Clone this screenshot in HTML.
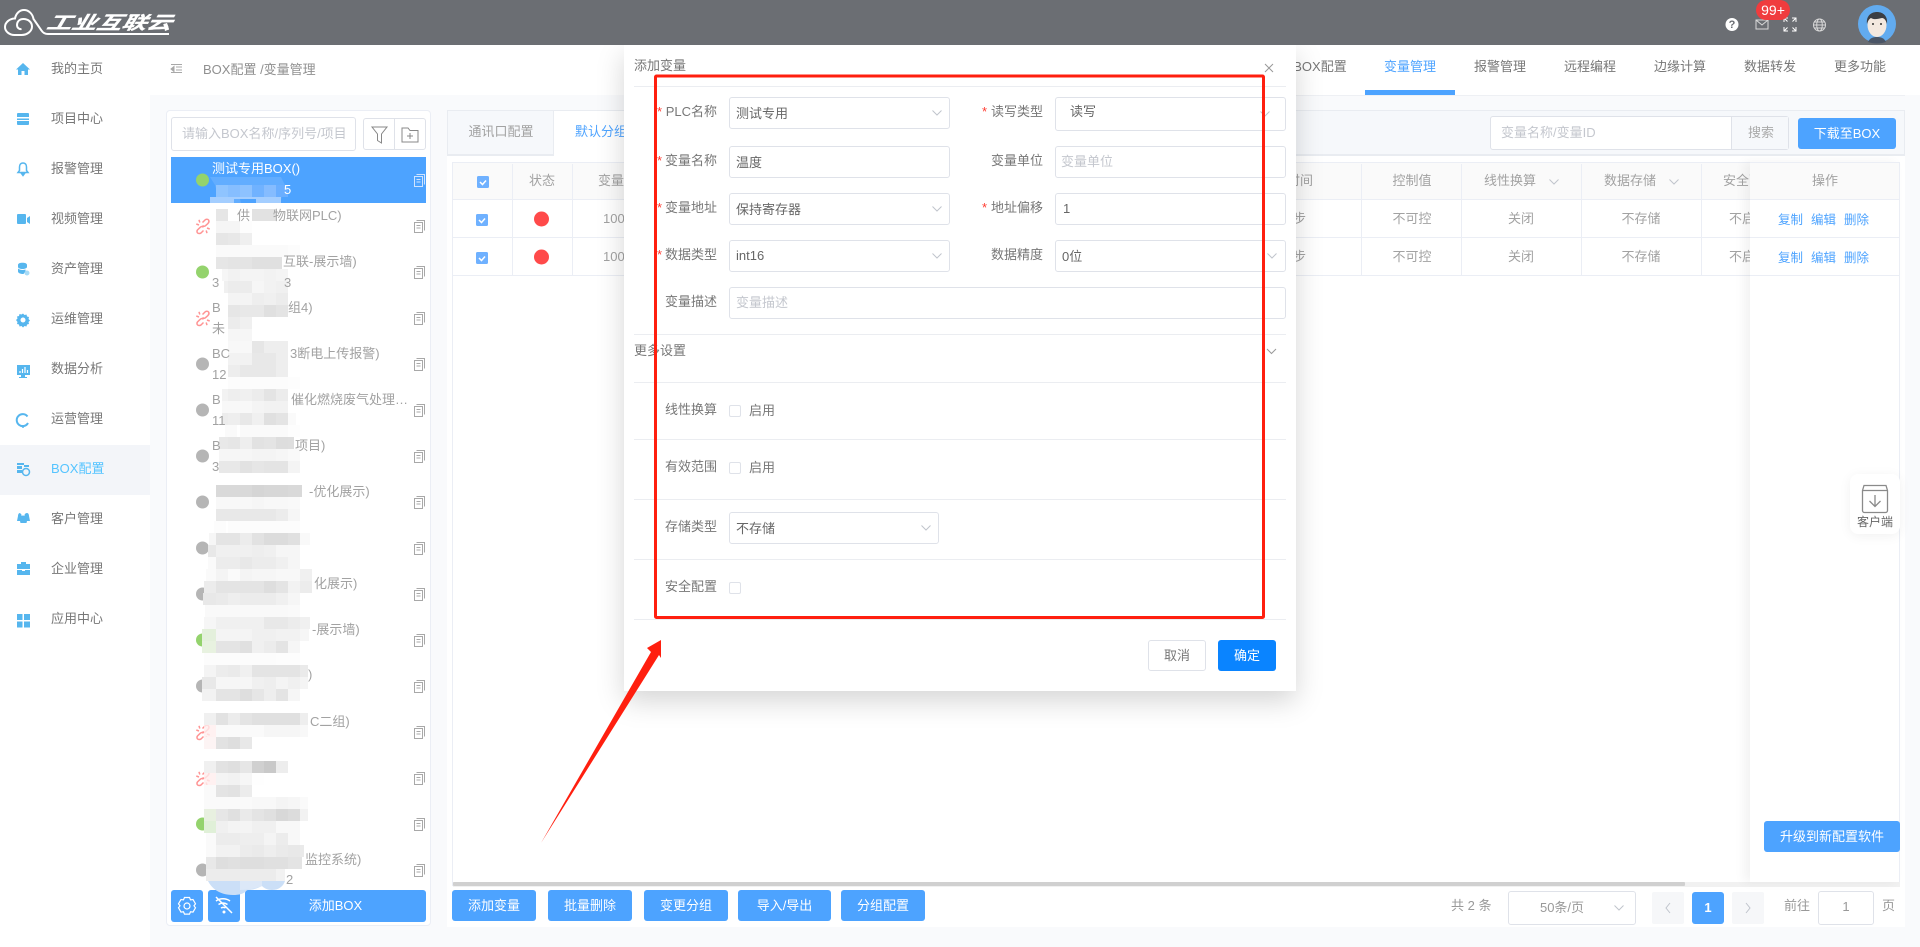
<!DOCTYPE html>
<html lang="zh-CN"><head><meta charset="utf-8"><title>BOX配置</title>
<style>
html,body{margin:0;padding:0;width:1920px;height:947px;overflow:hidden;background:#fff}
body{position:relative;font-family:"Liberation Sans","Noto Sans CJK SC",sans-serif;font-size:13px;color:#777}
.a,.t,.c,.r{position:absolute;box-sizing:border-box}
.t,.c,.r{white-space:nowrap;height:18px;line-height:18px}
.c{transform:translateX(-50%)}
.r{transform:translateX(-100%)}
.b{background:#4da3ff;color:#fff;border-radius:3px;text-align:center}
.i{background:#fff;border:1px solid #dfe2e9;border-radius:3px}
.g{color:#a2a2a2}
.w{color:#fff}
.l{color:#4da3ff}
.h{color:#c4c7ce}
.lb{color:#777}
.v{color:#666}
.s{color:#ff3b30}
svg{position:absolute;left:0;top:0;overflow:visible}
.m rect{width:12px;height:12px}
</style></head><body>
<svg width="0" height="0" style="position:absolute"><defs>
<symbol id="cp" viewBox="0 0 11 13" overflow="visible"><path d="M2.500 .5h8v10M.5 2.500h8v10h-8zM2.500 5.500h4M2.500 8h4" fill="none" stroke="#a8a8a8" stroke-width="1"/></symbol>
<symbol id="ch" viewBox="0 0 10 6" overflow="visible"><path d="M.5 .5L5 5 9.500 .5" fill="none" stroke="#c0c4cc" stroke-width="1"/></symbol>
<symbol id="lk" viewBox="0 0 14 15" overflow="visible"><path d="M6.500 3.500l2.500-2.500c1-1 3-1 3.700.2.600 1.300.200 2.300-.700 3.200l-2.500 2.300c-1 .8-2.200.6-3-.2M7.500 11.500L5 14c-1 .8-3 .8-3.700-.4-.6-1.200-.2-2.400.7-3.200l2.500-2.300c1-.8 2.200-.6 3 .2M.3 5L3 6M3 .8l.8 2.700M13.700 10L11 9M11 14.200l-.8-2.700" fill="none" stroke="#ff9494" stroke-width="1.500"/></symbol>
</defs></svg>

<!-- main background -->
<div class="a" style="left:150px;top:95px;width:1770px;height:852px;background:#f9fafc"></div>
<div class="a" style="left:1296px;top:95px;width:609px;height:1px;background:#eef0f4"></div>
<!-- sidebar active -->
<div class="a" style="left:0;top:445px;width:150px;height:50px;background:#f3f5f9"></div>

<!-- sidebar icons -->
<svg width="150" height="680">
<g fill="#56b6ee">
<path d="M23 63l7 6.500h-2v5.500h-3.500v-4h-3v4H18v-5.500h-2z"/>
<path d="M18 113h10a1 1 0 0 1 1 1v3H17v-3a1 1 0 0 1 1-1zM17 118.500h12v1.500H17zM17 121h12v3a1 1 0 0 1-1 1H18a1 1 0 0 1-1-1z"/>
<path d="M23 163c2.500 0 3.500 2 3.500 4v3.500l1.500 2h-10l1.500-2V167c0-2 1-4 3.500-4zM21.500 173.500h3l-1.500 2z" fill="none" stroke="#56b6ee" stroke-width="1.500"/>
<path d="M17 215a1 1 0 0 1 1-1h7a1 1 0 0 1 1 1v8a1 1 0 0 1-1 1h-7a1 1 0 0 1-1-1zM27 218l3-2v8l-3-2z"/>
<path d="M18 265c0-1.500 2-2.200 4.500-2.200s4.500.7 4.500 2.200v2c0 1-2 2-4.500 2s-4.500-1-4.500-2zM18 268.500c1 1 3 1.500 4.500 1.500 1 0 2-.2 3-.5v2l-2 2.500c-3 0-5.500-1-5.500-2.500z"/>
<circle cx="27" cy="273" r="2.500" fill="#a8dbf6"/>
<path d="M23 313.500l1.500 1.500 2-.5.500 2 2 .5-.5 2 1.500 1.500-1.500 1.500.5 2-2 .5-.5 2-2-.5-1.500 1.500-1.500-1.500-2 .5-.5-2-2-.5.5-2L16 320l1.500-1.500-.5-2 2-.5.500-2 2 .5z"/>
<circle cx="23" cy="320" r="2.500" fill="#fff"/>
<path d="M17 365h13v10h-5v2h2v1h-8v-1h2v-2h-4z"/>
<path d="M20 373v-2M22.500 373v-4M25 373v-6M27.500 373v-3" stroke="#fff" stroke-width="1.200"/>
</g>
<g fill="none" stroke="#56b6ee" stroke-width="2"><path d="M27.500 416.500a6 6 0 1 0 .5 6.500"/><path d="M23 425v3" stroke-width="1.500"/></g>
<g fill="#56b6ee">
<path d="M17 463h7v2h-7zM17 466h5v3h-5zM17 470h5v3h-5zM24 465h5v2h-5z"/>
<path d="M19 513a2.500 2.500 0 0 1 2.500 3 2.500 2.500 0 0 1 3 0 2.500 2.500 0 0 1 2.500-3c1.300 0 2 1.500 2 3l1 5h-3l-.5 2h-6l-.5-2h-3l1-5c0-1.500.700-3 2-3z"/>
<path d="M17 564h4v-2h5v2h4v5H17zM17 570h5v1h3v-1h5v5H17zM22.500 563h2v1h-2z"/>
<path d="M17 614h5.500v6H17zM24 614h6v6h-6zM17 621.500h5.500v6H17zM24 621.500h6v6h-6z"/>
</g>
<circle cx="26" cy="472" r="3.500" fill="#f3f5f9" stroke="#56b6ee" stroke-width="1.500"/>
</svg>
<span class="t" style="left:51px;top:60px">我的主页</span>
<span class="t" style="left:51px;top:110px">项目中心</span>
<span class="t" style="left:51px;top:160px">报警管理</span>
<span class="t" style="left:51px;top:210px">视频管理</span>
<span class="t" style="left:51px;top:260px">资产管理</span>
<span class="t" style="left:51px;top:310px">运维管理</span>
<span class="t" style="left:51px;top:360px">数据分析</span>
<span class="t" style="left:51px;top:410px">运营管理</span>
<span class="t" style="left:51px;top:460px;color:#55c4ff">BOX配置</span>
<span class="t" style="left:51px;top:510px">客户管理</span>
<span class="t" style="left:51px;top:560px">企业管理</span>
<span class="t" style="left:51px;top:610px">应用中心</span>

<!-- breadcrumb -->
<svg width="200" height="90"><path d="M171 64.500h11M176 67h6M176 70h6M171 72.500h11M174 66.500l-3 2.500 3 2.500z" stroke="#a8a8a8" stroke-width="1" fill="#a8a8a8"/></svg>
<span class="t g" style="left:203px;top:61px;color:#909090">BOX配置 /变量管理</span>

<!-- top tabs -->
<span class="c lb" style="left:1320px;top:58px">BOX配置</span>
<span class="c l" style="left:1410px;top:58px">变量管理</span>
<div class="a" style="left:1365px;top:90px;width:90px;height:5px;background:#4da3ff"></div>
<span class="c lb" style="left:1500px;top:58px">报警管理</span>
<span class="c lb" style="left:1590px;top:58px">远程编程</span>
<span class="c lb" style="left:1680px;top:58px">边缘计算</span>
<span class="c lb" style="left:1770px;top:58px">数据转发</span>
<span class="c lb" style="left:1860px;top:58px">更多功能</span>

<!-- left panel -->
<div class="a" style="left:166px;top:110px;width:265px;height:816px;background:#fff;border:1px solid #ebeef5;border-radius:4px"></div>
<div class="a i" style="left:171px;top:117px;width:185px;height:34px"></div>
<span class="t h" style="left:182px;top:125px">请输入BOX名称/序列号/项目</span>
<div class="a i" style="left:363px;top:118px;width:63px;height:32px"></div>
<div class="a" style="left:394px;top:118px;width:1px;height:32px;background:#dfe2e9"></div>
<svg width="440" height="160"><path d="M372 127h15l-5.500 7v9l-4-2.500V134z" fill="none" stroke="#888" stroke-width="1"/><path d="M402 128h6l2 2.500h8v11.500h-16zM410 133v6M407 136h6" fill="none" stroke="#888" stroke-width="1"/></svg>
<div class="a" style="left:171px;top:157px;width:255px;height:46px;background:#4da3ff"></div>

<svg width="440" height="900">
<g fill="#b5b5b5">
<circle cx="202.500" cy="364" r="6.500"/><circle cx="202.500" cy="410" r="6.500"/><circle cx="202.500" cy="456" r="6.500"/><circle cx="202.500" cy="502" r="6.500"/><circle cx="202.500" cy="548" r="6.500"/><circle cx="202.500" cy="594" r="6.500"/><circle cx="202.500" cy="686" r="6.500"/><circle cx="202.500" cy="870" r="6.500"/>
</g>
<g fill="#94d36d"><circle cx="202.500" cy="180" r="6.500"/><circle cx="202.500" cy="272" r="6.500"/><circle cx="202.500" cy="640" r="6.500"/><circle cx="202.500" cy="824" r="6.500"/></g>
<use href="#lk" x="196" y="219" width="14" height="15"/><use href="#lk" x="196" y="311" width="14" height="15"/><use href="#lk" x="196" y="725" width="14" height="15"/><use href="#lk" x="196" y="771" width="14" height="15"/>
<path d="M416.500 174.500h8v10M414.500 176.500h8v10h-8zM416.500 179.500h4M416.500 182h4" fill="none" stroke="#cfe4ff" stroke-width="1"/>
<use href="#cp" x="414" y="220" width="11" height="13"/><use href="#cp" x="414" y="266" width="11" height="13"/><use href="#cp" x="414" y="312" width="11" height="13"/><use href="#cp" x="414" y="358" width="11" height="13"/><use href="#cp" x="414" y="404" width="11" height="13"/><use href="#cp" x="414" y="450" width="11" height="13"/><use href="#cp" x="414" y="496" width="11" height="13"/><use href="#cp" x="414" y="542" width="11" height="13"/><use href="#cp" x="414" y="588" width="11" height="13"/><use href="#cp" x="414" y="634" width="11" height="13"/><use href="#cp" x="414" y="680" width="11" height="13"/><use href="#cp" x="414" y="726" width="11" height="13"/><use href="#cp" x="414" y="772" width="11" height="13"/><use href="#cp" x="414" y="818" width="11" height="13"/><use href="#cp" x="414" y="864" width="11" height="13"/>
</svg>

<!-- buttons under list -->
<div class="a b" style="left:171px;top:890px;width:32px;height:32px"></div>
<div class="a b" style="left:208px;top:890px;width:32px;height:32px"></div>
<div class="a b" style="left:245px;top:890px;width:181px;height:32px;line-height:32px">添加BOX</div>
<svg width="260" height="930"><path d="M184.500 897.500h5l1 2.300 2.500-.3 2.500 4.300-1.500 2 1.500 2-2.500 4.300-2.500-.3-1 2.300h-5l-1-2.300-2.500.3-2.500-4.300 1.500-2-1.500-2 2.500-4.300 2.500.3z" fill="none" stroke="#fff" stroke-width="1.200"/><circle cx="187" cy="906" r="3" fill="none" stroke="#fff" stroke-width="1.200"/><path d="M216 901c4-3 10-3 14 0M218.500 904.500c3-2 6-2 9 0M221 908c2-1 3-1 4.500 0M216 897l16 16" fill="none" stroke="#fff" stroke-width="1.500"/><circle cx="224" cy="912" r="1.500" fill="#fff"/></svg>

<!-- mosaic -->
<svg width="340" height="900" class="m">
<path d="M210 177h71l4 8-5 18h-22l4-4h-22l1 4h-21l-5-18z" fill="#62adff"/>
<rect x="210" y="197" fill="#a4ceff" style="width:24px;height:6px"/><rect x="256" y="197" fill="#a4ceff" style="width:25px;height:6px"/><rect x="234" y="197" fill="#a4ceff" style="width:22px;height:2px"/>
<g transform="translate(0,185)"><rect x="216" fill="#8fc4ff"/><rect x="228" fill="#86beff"/><rect x="240" fill="#8dc2ff"/><rect x="252" fill="#70b2ff"/><rect x="264" fill="#85bcff"/><rect x="276" fill="#6aaeff"/></g>
<path d="M214 203h19l1 6h18l5-6h1l-24 50h-16z" fill="#fff"/>
<g transform="translate(0,209)"><rect x="216" fill="#e6e6e6"/><rect x="252" fill="#e2e2e2"/><rect x="264" fill="#e2e2e2"/></g>
<g transform="translate(0,221)"><rect x="216" fill="#f5f5f5"/><rect x="228" fill="#f5f5f5"/><rect x="240" fill="#fdfdfd"/></g>
<g transform="translate(0,233)"><rect x="216" fill="#e6e6e6"/><rect x="228" fill="#e8e8e8"/><rect x="240" fill="#efefef"/></g>
<g transform="translate(0,245)"><rect x="216" fill="#fafafa"/><rect x="228" fill="#fafafa"/><rect x="240" fill="#fafafa"/><rect x="252" fill="#fafafa"/><rect x="264" fill="#fafafa"/><rect x="276" fill="#fafafa"/><rect x="288" fill="#fcfcfc"/></g>
<g transform="translate(0,257)"><rect x="216" fill="#e6e6e6"/><rect x="228" fill="#e4e4e4"/><rect x="240" fill="#e4e4e4"/><rect x="252" fill="#e0e0e0"/><rect x="264" fill="#e0e0e0"/><rect x="276" fill="#e0e0e0" style="width:6px"/></g>
<g transform="translate(0,269)"><rect x="222" fill="#f6f6f6"/><rect x="228" fill="#f2f2f2"/><rect x="240" fill="#f4f4f4"/><rect x="252" fill="#f4f4f4"/><rect x="264" fill="#f2f2f2"/><rect x="276" fill="#f4f4f4"/></g>
<g transform="translate(0,281)"><rect x="224" fill="#f0f0f0"/><rect x="228" fill="#ececec"/><rect x="240" fill="#ececec"/><rect x="252" fill="#f6f6f6"/><rect x="264" fill="#f2f2f2"/><rect x="276" fill="#f0f0f0"/></g>
<g transform="translate(0,293)"><rect x="228" fill="#f4f4f4"/><rect x="240" fill="#f4f4f4"/><rect x="252" fill="#eeeeee"/><rect x="264" fill="#f0f0f0"/><rect x="276" fill="#ececec"/></g>
<g transform="translate(0,305)"><rect x="228" fill="#e6e6e6"/><rect x="240" fill="#e8e8e8"/><rect x="252" fill="#e8e8e8"/><rect x="264" fill="#e0e0e0"/><rect x="276" fill="#e4e4e4"/></g>
<g transform="translate(0,317)"><rect x="228" fill="#ececec"/><rect x="240" fill="#f0f0f0"/></g>
<g transform="translate(0,329)"><rect x="228" fill="#f6f6f6"/><rect x="240" fill="#f6f6f6"/></g>
<g transform="translate(0,341)"><rect x="228" fill="#f8f8f8"/><rect x="240" fill="#f8f8f8"/><rect x="252" fill="#e6e6e6"/><rect x="264" fill="#eeeeee"/><rect x="276" fill="#eeeeee"/></g>
<g transform="translate(0,353)"><rect x="228" fill="#f2f2f2"/><rect x="240" fill="#f2f2f2"/><rect x="252" fill="#e8e8e8"/><rect x="264" fill="#e8e8e8"/><rect x="276" fill="#eeeeee"/></g>
<g transform="translate(0,365)"><rect x="228" fill="#ededed"/><rect x="240" fill="#e8e8e8"/><rect x="252" fill="#e8e8e8"/><rect x="264" fill="#e8e8e8"/><rect x="276" fill="#eeeeee"/></g>
<g transform="translate(0,377)"><rect x="228" fill="#fcfcfc"/><rect x="240" fill="#fcfcfc"/><rect x="252" fill="#fcfcfc"/><rect x="264" fill="#fcfcfc"/><rect x="276" fill="#fcfcfc"/><rect x="288" fill="#fdfdfd"/></g>
<g transform="translate(0,389)"><rect x="222" fill="#f2f2f2"/><rect x="228" fill="#eeeeee"/><rect x="240" fill="#f0f0f0"/><rect x="252" fill="#ececec"/><rect x="264" fill="#e4e4e4"/><rect x="276" fill="#ececec"/></g>
<g transform="translate(0,401)"><rect x="222" fill="#f8f8f8"/><rect x="228" fill="#f8f8f8"/><rect x="240" fill="#f8f8f8"/><rect x="252" fill="#f4f4f4"/><rect x="264" fill="#f2f2f2"/><rect x="276" fill="#f2f2f2"/></g>
<g transform="translate(0,413)"><rect x="222" fill="#ececec"/><rect x="228" fill="#eeeeee"/><rect x="240" fill="#e8e8e8"/><rect x="252" fill="#f0f0f0"/><rect x="264" fill="#e0e0e0"/><rect x="276" fill="#e4e4e4"/><rect x="288" fill="#fafafa" style="width:8px"/></g>
<g transform="translate(0,425)"><rect x="225" fill="#fafafa"/><rect x="240" fill="#fafafa"/><rect x="252" fill="#fafafa"/><rect x="264" fill="#fafafa"/><rect x="276" fill="#fafafa"/><rect x="288" fill="#fdfdfd"/></g>
<g transform="translate(0,437)"><rect x="219" fill="#e8e8e8"/><rect x="228" fill="#e6e6e6"/><rect x="240" fill="#eeeeee"/><rect x="252" fill="#e2e2e2"/><rect x="264" fill="#e4e4e4"/><rect x="276" fill="#dddddd"/><rect x="288" fill="#dedede" style="width:6px"/></g>
<g transform="translate(0,449)"><rect x="219" fill="#f6f6f6"/><rect x="228" fill="#f6f6f6"/><rect x="240" fill="#f6f6f6"/><rect x="252" fill="#f4f4f4"/><rect x="264" fill="#f4f4f4"/><rect x="276" fill="#f6f6f6"/><rect x="288" fill="#f9f9f9"/></g>
<g transform="translate(0,461)"><rect x="219" fill="#e8e8e8"/><rect x="228" fill="#e8e8e8"/><rect x="240" fill="#e2e2e2"/><rect x="252" fill="#e6e6e6"/><rect x="264" fill="#e4e4e4"/><rect x="276" fill="#e4e4e4"/><rect x="288" fill="#f4f4f4"/></g>
<g transform="translate(0,485)"><rect x="216" fill="#d9d9d9"/><rect x="228" fill="#d9d9d9"/><rect x="240" fill="#d9d9d9"/><rect x="252" fill="#d5d5d5"/><rect x="264" fill="#d7d7d7"/><rect x="276" fill="#d7d7d7"/><rect x="288" fill="#d9d9d9" style="width:14px"/></g>
<g transform="translate(0,497)"><rect x="216" fill="#f8f8f8"/><rect x="228" fill="#f8f8f8"/><rect x="240" fill="#f8f8f8"/><rect x="252" fill="#f6f6f6"/><rect x="264" fill="#f8f8f8"/><rect x="276" fill="#f8f8f8"/><rect x="288" fill="#f9f9f9"/></g>
<g transform="translate(0,509)"><rect x="216" fill="#e8e8e8"/><rect x="228" fill="#e8e8e8"/><rect x="240" fill="#e8e8e8"/><rect x="252" fill="#e8e8e8"/><rect x="264" fill="#e8e8e8"/><rect x="276" fill="#ececec"/><rect x="288" fill="#f6f6f6"/></g>
<g transform="translate(0,521)"><rect x="214" fill="#fcfcfc"/><rect x="228" fill="#fcfcfc"/><rect x="240" fill="#fcfcfc"/><rect x="252" fill="#fcfcfc"/><rect x="264" fill="#fcfcfc"/><rect x="276" fill="#fcfcfc"/><rect x="288" fill="#fcfcfc"/></g>
<g transform="translate(0,533)"><rect x="209" fill="#f6f6f6" style="width:7px"/><rect x="216" fill="#e4e4e4"/><rect x="228" fill="#e4e4e4"/><rect x="240" fill="#ececec"/><rect x="252" fill="#e2e2e2"/><rect x="264" fill="#dcdcdc"/><rect x="276" fill="#dcdcdc"/><rect x="288" fill="#e0e0e0"/><rect x="300" fill="#f9f9f9" style="width:10px"/></g>
<g transform="translate(0,545)"><rect x="208" fill="#e8e8e8" style="width:8px"/><rect x="216" fill="#f0f0f0"/><rect x="228" fill="#f0f0f0"/><rect x="240" fill="#f0f0f0"/><rect x="252" fill="#eeeeee"/><rect x="264" fill="#f0f0f0"/><rect x="276" fill="#f6f6f6"/><rect x="288" fill="#f6f6f6"/></g>
<g transform="translate(0,557)"><rect x="208" fill="#fafafa" style="width:8px"/><rect x="216" fill="#ececec"/><rect x="228" fill="#ececec"/><rect x="240" fill="#e8e8e8"/><rect x="252" fill="#ececec"/><rect x="264" fill="#ececec"/><rect x="276" fill="#f0f0f0"/><rect x="288" fill="#f6f6f6"/></g>
<g transform="translate(0,569)"><rect x="206" fill="#fafafa" style="width:10px"/><rect x="216" fill="#f4f4f4"/><rect x="228" fill="#fafafa"/><rect x="240" fill="#f4f4f4"/><rect x="252" fill="#f6f6f6"/><rect x="264" fill="#f6f6f6"/><rect x="276" fill="#f8f8f8"/><rect x="288" fill="#f8f8f8"/><rect x="300" fill="#f0f0f0"/></g>
<g transform="translate(0,581)"><rect x="204" fill="#ececec"/><rect x="216" fill="#e4e4e4"/><rect x="228" fill="#e4e4e4"/><rect x="240" fill="#e4e4e4"/><rect x="252" fill="#e4e4e4"/><rect x="264" fill="#dedede"/><rect x="276" fill="#e4e4e4"/><rect x="288" fill="#f2f2f2"/><rect x="300" fill="#ececec"/></g>
<g transform="translate(0,593)"><rect x="203" fill="#e8e8e8" style="width:13px"/><rect x="216" fill="#eaeaea"/><rect x="228" fill="#eeeeee"/><rect x="240" fill="#ececec"/><rect x="252" fill="#ececec"/><rect x="264" fill="#ececec"/><rect x="276" fill="#f0f0f0"/><rect x="288" fill="#f6f6f6"/></g>
<g transform="translate(0,605)"><rect x="205" fill="#f9f9f9" style="width:11px"/><rect x="216" fill="#f9f9f9"/><rect x="228" fill="#f9f9f9"/><rect x="240" fill="#f9f9f9"/><rect x="252" fill="#f9f9f9"/><rect x="264" fill="#f9f9f9"/><rect x="276" fill="#f9f9f9"/><rect x="288" fill="#fafafa"/></g>
<g transform="translate(0,617)"><rect x="204" fill="#f6f6f6"/><rect x="216" fill="#f0f0f0"/><rect x="228" fill="#f0f0f0"/><rect x="240" fill="#f0f0f0"/><rect x="252" fill="#f0f0f0"/><rect x="264" fill="#e8e8e8"/><rect x="276" fill="#e8e8e8"/><rect x="288" fill="#ececec"/><rect x="300" fill="#f0f0f0" style="width:10px"/></g>
<g transform="translate(0,629)"><rect x="202" fill="#e4f0dc" style="width:14px"/><rect x="216" fill="#f4f4f4"/><rect x="228" fill="#f4f4f4"/><rect x="240" fill="#f4f4f4"/><rect x="252" fill="#f0f0f0"/><rect x="264" fill="#f0f0f0"/><rect x="276" fill="#f2f2f2"/><rect x="288" fill="#f2f2f2"/><rect x="300" fill="#f6f6f6" style="width:9px"/></g>
<g transform="translate(0,641)"><rect x="202" fill="#e8f2e0" style="width:14px"/><rect x="216" fill="#e4e4e4"/><rect x="228" fill="#e4e4e4"/><rect x="240" fill="#e0e0e0"/><rect x="252" fill="#f0f0f0"/><rect x="264" fill="#ececec"/><rect x="276" fill="#e4e4e4"/><rect x="288" fill="#f6f6f6"/></g>
<g transform="translate(0,653)"><rect x="204" fill="#fcfcfc"/><rect x="216" fill="#fcfcfc"/><rect x="228" fill="#fcfcfc"/><rect x="240" fill="#fcfcfc"/><rect x="252" fill="#fcfcfc"/><rect x="264" fill="#fcfcfc"/><rect x="276" fill="#fdfdfd"/><rect x="288" fill="#fdfdfd"/></g>
<g transform="translate(0,665)"><rect x="204" fill="#f4f4f4"/><rect x="216" fill="#ececec"/><rect x="228" fill="#eaeaea"/><rect x="240" fill="#f0f0f0"/><rect x="252" fill="#e4e4e4"/><rect x="264" fill="#e4e4e4"/><rect x="276" fill="#e4e4e4"/><rect x="288" fill="#e4e4e4"/><rect x="300" fill="#eaeaea" style="width:8px"/></g>
<g transform="translate(0,677)"><rect x="202" fill="#e8e8e8" style="width:14px"/><rect x="216" fill="#f6f6f6"/><rect x="228" fill="#f6f6f6"/><rect x="240" fill="#f6f6f6"/><rect x="252" fill="#f0f0f0"/><rect x="264" fill="#eeeeee"/><rect x="276" fill="#f4f4f4"/><rect x="288" fill="#f0f0f0"/><rect x="300" fill="#f4f4f4" style="width:8px"/></g>
<g transform="translate(0,689)"><rect x="202" fill="#f2f2f2" style="width:14px"/><rect x="216" fill="#e4e4e4"/><rect x="228" fill="#e4e4e4"/><rect x="240" fill="#dedede"/><rect x="252" fill="#e6e6e6"/><rect x="264" fill="#eeeeee"/><rect x="276" fill="#e4e4e4"/><rect x="288" fill="#f6f6f6"/></g>
<g transform="translate(0,713)"><rect x="204" fill="#f0f0f0"/><rect x="216" fill="#e2e2e2"/><rect x="228" fill="#ececec"/><rect x="240" fill="#e4e4e4"/><rect x="252" fill="#e0e0e0"/><rect x="264" fill="#e0e0e0"/><rect x="276" fill="#e0e0e0"/><rect x="288" fill="#e0e0e0"/><rect x="300" fill="#eeeeee" style="width:8px"/></g>
<g transform="translate(0,725)"><rect x="204" fill="#ffeeee" opacity=".8"/><rect x="216" fill="#fafafa"/><rect x="228" fill="#fafafa"/><rect x="240" fill="#fafafa"/><rect x="252" fill="#fafafa"/><rect x="264" fill="#f6f6f6"/><rect x="276" fill="#f6f6f6"/><rect x="288" fill="#f6f6f6"/><rect x="300" fill="#f8f8f8" style="width:8px"/></g>
<g transform="translate(0,737)"><rect x="204" fill="#fdf4f4"/><rect x="216" fill="#e2e2e2"/><rect x="228" fill="#dedede"/><rect x="240" fill="#e8e8e8"/></g>
<g transform="translate(0,761)"><rect x="204" fill="#f0f0f0"/><rect x="216" fill="#e2e2e2"/><rect x="228" fill="#dfdfdf"/><rect x="240" fill="#e6e6e6"/><rect x="252" fill="#d0d0d0"/><rect x="264" fill="#c9c9c9"/><rect x="276" fill="#ededed"/></g>
<g transform="translate(0,773)"><rect x="204" fill="#ffeeee" opacity=".8"/><rect x="216" fill="#f4f4f4"/><rect x="228" fill="#f2f2f2"/><rect x="240" fill="#f6f6f6"/><rect x="252" fill="#fefefe"/></g>
<g transform="translate(0,785)"><rect x="204" fill="#fafafa"/><rect x="216" fill="#e4e4e4"/><rect x="228" fill="#e2e2e2"/><rect x="240" fill="#ececec"/></g>
<g transform="translate(0,797)"><rect x="204" fill="#fafafa"/><rect x="216" fill="#fafafa"/><rect x="228" fill="#fafafa"/><rect x="240" fill="#fafafa"/><rect x="252" fill="#f8f8f8"/><rect x="264" fill="#f8f8f8"/><rect x="276" fill="#f4f4f4"/><rect x="288" fill="#f6f6f6"/><rect x="300" fill="#fafafa" style="width:8px"/></g>
<g transform="translate(0,809)"><rect x="204" fill="#e8f0e0"/><rect x="216" fill="#e6e6e6"/><rect x="228" fill="#e0e0e0"/><rect x="240" fill="#eaeaea"/><rect x="252" fill="#e4e4e4"/><rect x="264" fill="#e0e0e0"/><rect x="276" fill="#d8d8d8"/><rect x="288" fill="#dcdcdc"/><rect x="300" fill="#f2f2f2" style="width:8px"/></g>
<g transform="translate(0,821)"><rect x="204" fill="#e0f0d8"/><rect x="216" fill="#f0f0f0"/><rect x="228" fill="#f4f4f4"/><rect x="240" fill="#f4f4f4"/><rect x="252" fill="#f0f0f0"/><rect x="264" fill="#f0f0f0"/><rect x="276" fill="#f8f8f8"/><rect x="288" fill="#f8f8f8"/></g>
<g transform="translate(0,833)"><rect x="206" fill="#fafafa" style="width:10px"/><rect x="216" fill="#ececec"/><rect x="228" fill="#ececec"/><rect x="240" fill="#eeeeee"/><rect x="252" fill="#eeeeee"/><rect x="264" fill="#f4f4f4"/><rect x="276" fill="#ececec"/><rect x="288" fill="#f8f8f8"/></g>
<g transform="translate(0,845)"><rect x="206" fill="#fafafa" style="width:10px"/><rect x="216" fill="#f2f2f2"/><rect x="228" fill="#f2f2f2"/><rect x="240" fill="#ececec"/><rect x="252" fill="#eaeaea"/><rect x="264" fill="#eeeeee"/><rect x="276" fill="#eaeaea"/><rect x="288" fill="#e8e8e8"/><rect x="300" fill="#eaeaea" style="width:4px"/></g>
<g transform="translate(0,857)"><rect x="206" fill="#e8e8e8" style="width:10px"/><rect x="216" fill="#dedede"/><rect x="228" fill="#e0e0e0"/><rect x="240" fill="#dedede"/><rect x="252" fill="#dedede"/><rect x="264" fill="#e0e0e0"/><rect x="276" fill="#e0e0e0"/><rect x="288" fill="#e4e4e4" style="width:14px"/></g>
<g transform="translate(0,869)"><rect x="206" fill="#ececec" style="width:10px"/><rect x="216" fill="#ececec"/><rect x="228" fill="#ececec"/><rect x="240" fill="#ececec"/><rect x="252" fill="#ececec"/><rect x="264" fill="#ececec"/><rect x="276" fill="#f2f2f2" style="width:9px"/></g>
<path d="M208 881h77c-2 6-7 9-13 9-5 0-8-2-10-4-4 2-9 4-15 4-3 4-8 5-14 5-10 0-20-4-25-14z" fill="#cbdff7"/>
<path d="M240 881h22v5c-4 2-14 4-22 4z" fill="#dce8f8"/>
</svg>

<!-- list text fragments on top of mosaic -->
<span class="t w" style="left:212px;top:160px">测试专用BOX()</span>
<span class="t w" style="left:284px;top:181px">5</span>
<span class="t g" style="left:237px;top:207px">供</span><span class="t g" style="left:273px;top:207px">物联网PLC)</span>
<span class="t g" style="left:283px;top:253px">互联-展示墙)</span><span class="t g" style="left:212px;top:274px">3</span><span class="t g" style="left:284px;top:274px">3</span>
<span class="t g" style="left:212px;top:299px">B</span><span class="t g" style="left:288px;top:299px">组4)</span><span class="t g" style="left:212px;top:320px">未</span>
<span class="t g" style="left:212px;top:345px">BC</span><span class="t g" style="left:290px;top:345px">3断电上传报警)</span><span class="t g" style="left:212px;top:366px">12</span>
<span class="t g" style="left:212px;top:391px">B</span><span class="t g" style="left:291px;top:391px">催化燃烧废气处理…</span><span class="t g" style="left:212px;top:412px">11</span>
<span class="t g" style="left:212px;top:437px">B</span><span class="t g" style="left:295px;top:437px">项目)</span><span class="t g" style="left:212px;top:458px">3</span>
<span class="t g" style="left:309px;top:483px">-优化展示)</span>
<span class="t g" style="left:314px;top:575px">化展示)</span>
<span class="t g" style="left:312px;top:621px">-展示墙)</span>
<span class="t g" style="left:308px;top:666px">)</span>
<span class="t g" style="left:310px;top:713px">C二组)</span>
<span class="t g" style="left:305px;top:851px">监控系统)</span>
<span class="t g" style="left:286px;top:871px">2</span>

<!-- right panel -->
<div class="a" style="left:447px;top:110px;width:1458px;height:817px;background:#fff"></div>
<div class="a" style="left:447px;top:110px;width:1458px;height:46px;background:#f6f8fb;border:1px solid #e9ecf1;border-bottom:2px solid #e9ecf1"></div>
<div class="a" style="left:553px;top:111px;width:120px;height:45px;background:#fff;border-left:1px solid #e9ecf1"></div>
<span class="c g" style="left:501px;top:123px">通讯口配置</span>
<span class="t l" style="left:575px;top:123px">默认分组</span>
<div class="a i" style="left:1490px;top:116px;width:299px;height:34px"></div>
<div class="a" style="left:1731px;top:117px;width:57px;height:32px;background:#f6f8fb;border-left:1px solid #dfe2e9"></div>
<span class="t h" style="left:1501px;top:124px">变量名称/变量ID</span>
<span class="c h" style="left:1761px;top:124px;color:#aaa">搜索</span>
<div class="a b" style="left:1798px;top:118px;width:98px;height:31px;line-height:31px">下载至BOX</div>

<!-- table -->
<div class="a" style="left:452px;top:162px;width:1448px;height:37px;background:#fafafa"></div>
<div class="a" style="left:452px;top:162px;width:1px;height:724px;background:#ebeef5"></div>
<div class="a" style="left:452px;top:162px;width:1448px;height:1px;background:#ebeef5"></div>
<div class="a" style="left:452px;top:199px;width:1448px;height:1px;background:#ebeef5"></div>
<div class="a" style="left:452px;top:237px;width:1448px;height:1px;background:#ebeef5"></div>
<div class="a" style="left:452px;top:275px;width:1448px;height:1px;background:#ebeef5"></div>
<div class="a" style="left:512px;top:164px;width:1px;height:111px;background:#ebeef5"></div>
<div class="a" style="left:572px;top:164px;width:1px;height:111px;background:#ebeef5"></div>
<div class="a" style="left:1361px;top:164px;width:1px;height:111px;background:#ebeef5"></div>
<div class="a" style="left:1461px;top:164px;width:1px;height:111px;background:#ebeef5"></div>
<div class="a" style="left:1581px;top:164px;width:1px;height:111px;background:#ebeef5"></div>
<div class="a" style="left:1701px;top:164px;width:1px;height:111px;background:#ebeef5"></div>
<svg width="1720" height="300">
<g fill="#6fb1ff"><rect x="477" y="176" width="12" height="12" rx="1.500"/><rect x="476" y="214" width="12" height="12" rx="1.500"/><rect x="476" y="252" width="12" height="12" rx="1.500"/></g>
<g fill="none" stroke="#fff" stroke-width="1.500"><path d="M480 182l2.500 2.500 3.500-4"/><path d="M479 220l2.500 2.500 3.500-4"/><path d="M479 258l2.500 2.500 3.500-4"/></g>
<circle cx="541.500" cy="219" r="7.500" fill="#ff4a4a"/><circle cx="541.500" cy="257" r="7.500" fill="#ff4a4a"/>
<use href="#ch" x="1549" y="179" width="10" height="6"/><use href="#ch" x="1669" y="179" width="10" height="6"/>
</svg>
<span class="c g" style="left:542px;top:172px">状态</span>
<span class="t g" style="left:598px;top:172px">变量</span>
<span class="t g" style="left:603px;top:210px">100</span>
<span class="t g" style="left:603px;top:248px">100</span>
<span class="t g" style="left:1287px;top:172px">时间</span>
<span class="t g" style="left:1280px;top:210px">同步</span>
<span class="t g" style="left:1280px;top:248px">同步</span>
<span class="c g" style="left:1412px;top:172px">控制值</span>
<span class="c g" style="left:1412px;top:210px">不可控</span><span class="c g" style="left:1412px;top:248px">不可控</span>
<span class="t g" style="left:1484px;top:172px">线性换算</span>
<span class="c g" style="left:1521px;top:210px">关闭</span><span class="c g" style="left:1521px;top:248px">关闭</span>
<span class="t g" style="left:1604px;top:172px">数据存储</span>
<span class="c g" style="left:1641px;top:210px">不存储</span><span class="c g" style="left:1641px;top:248px">不存储</span>
<span class="t g" style="left:1723px;top:172px">安全配置</span>
<span class="t g" style="left:1729px;top:210px">不启用</span><span class="t g" style="left:1729px;top:248px">不启用</span>

<!-- scrollbar -->
<div class="a" style="left:453px;top:882px;width:1447px;height:5px;background:#f1f1f1"></div>
<div class="a" style="left:453px;top:882px;width:1232px;height:4px;background:#d0d0d0;border-radius:1px"></div>

<!-- op column -->
<div class="a" style="left:1750px;top:162px;width:150px;height:720px;background:#fff;border-right:1px solid #ebeef5;box-shadow:-6px 0 10px rgba(0,0,0,.05)"></div>
<div class="a" style="left:1750px;top:162px;width:149px;height:37px;background:#fafafa"></div>
<div class="a" style="left:1750px;top:162px;width:149px;height:1px;background:#ebeef5"></div>
<div class="a" style="left:1750px;top:199px;width:149px;height:1px;background:#ebeef5"></div>
<div class="a" style="left:1750px;top:237px;width:149px;height:1px;background:#ebeef5"></div>
<div class="a" style="left:1750px;top:275px;width:149px;height:1px;background:#ebeef5"></div>
<span class="c g" style="left:1825px;top:172px">操作</span>
<span class="t l" style="left:1778px;top:211px;font-size:12.500px">复制</span><span class="t l" style="left:1811px;top:211px;font-size:12.500px">编辑</span><span class="t l" style="left:1844px;top:211px;font-size:12.500px">删除</span>
<span class="t l" style="left:1778px;top:249px;font-size:12.500px">复制</span><span class="t l" style="left:1811px;top:249px;font-size:12.500px">编辑</span><span class="t l" style="left:1844px;top:249px;font-size:12.500px">删除</span>
<div class="a b" style="left:1764px;top:821px;width:136px;height:31px;line-height:31px">升级到新配置软件</div>

<!-- client widget -->
<div class="a" style="left:1850px;top:474px;width:50px;height:60px;background:#fff;border-radius:8px;box-shadow:0 2px 12px rgba(0,0,0,.06)"></div>
<svg width="1920" height="540"><path d="M1862.500 490.500l1.500-5h22l1.500 5v20a2 2 0 0 1-2 2h-21a2 2 0 0 1-2-2zM1862.500 490.500h25M1875 495v11.500M1869.500 501l5.500 5.500 5.500-5.500" fill="none" stroke="#8a8a8a" stroke-width="1.300"/></svg>
<span class="c v" style="left:1875px;top:513px;font-size:12px">客户端</span>

<!-- bottom buttons -->
<div class="a b" style="left:452px;top:890px;width:84px;height:31px;line-height:31px">添加变量</div>
<div class="a b" style="left:548px;top:890px;width:84px;height:31px;line-height:31px">批量删除</div>
<div class="a b" style="left:644px;top:890px;width:84px;height:31px;line-height:31px">变更分组</div>
<div class="a b" style="left:738px;top:890px;width:93px;height:31px;line-height:31px">导入/导出</div>
<div class="a b" style="left:841px;top:890px;width:84px;height:31px;line-height:31px">分组配置</div>

<!-- pagination -->
<span class="t g" style="left:1451px;top:897px;color:#999">共 2 条</span>
<div class="a i" style="left:1508px;top:891px;width:128px;height:34px"></div>
<span class="c g" style="left:1562px;top:899px;color:#999">50条/页</span>
<div class="a" style="left:1652px;top:892px;width:32px;height:32px;background:#f6f7f9;border-radius:2px"></div>
<div class="a b" style="left:1692px;top:892px;width:32px;height:32px;line-height:32px;font-weight:bold">1</div>
<div class="a" style="left:1732px;top:892px;width:32px;height:32px;background:#f6f7f9;border-radius:2px"></div>
<span class="t g" style="left:1784px;top:897px;color:#999">前往</span>
<div class="a i" style="left:1818px;top:891px;width:56px;height:34px"></div>
<span class="c g" style="left:1846px;top:898px;color:#999">1</span>
<span class="t g" style="left:1882px;top:897px;color:#999">页</span>
<svg width="1920" height="940"><use href="#ch" x="1614" y="905" width="10" height="6"/><path d="M1670 903l-4 5 4 5" fill="none" stroke="#c0c4cc"/><path d="M1746 903l4 5-4 5" fill="none" stroke="#c0c4cc"/></svg>

<!-- modal -->
<div class="a" style="left:624px;top:45px;width:672px;height:646px;background:#fff;box-shadow:0 10px 26px rgba(0,0,0,.17)"></div>
<span class="t lb" style="left:634px;top:57px">添加变量</span>
<svg width="1300" height="700">
<path d="M1265 64l8 8M1273 64l-8 8" stroke="#999" stroke-width="1" fill="none"/>
<g fill="#ebedf1"><rect x="634" y="86" width="652" height="1"/><rect x="634" y="334" width="652" height="1"/><rect x="634" y="382" width="652" height="1"/><rect x="634" y="439" width="652" height="1"/><rect x="634" y="499" width="652" height="1"/><rect x="634" y="559" width="652" height="1"/><rect x="634" y="619" width="652" height="1"/></g>
</svg>
<div class="a i" style="left:729px;top:97px;width:221px;height:32px"></div>
<div class="a i" style="left:1055px;top:97px;width:231px;height:34px"></div>
<div class="a i" style="left:729px;top:146px;width:221px;height:32px"></div>
<div class="a i" style="left:1055px;top:146px;width:231px;height:32px"></div>
<div class="a i" style="left:729px;top:193px;width:221px;height:32px"></div>
<div class="a i" style="left:1055px;top:193px;width:231px;height:32px"></div>
<div class="a i" style="left:729px;top:240px;width:221px;height:32px"></div>
<div class="a i" style="left:1055px;top:240px;width:231px;height:32px"></div>
<div class="a i" style="left:729px;top:287px;width:557px;height:32px"></div>
<div class="a i" style="left:729px;top:512px;width:210px;height:32px"></div>
<svg width="1300" height="700">
<use href="#ch" x="932" y="110" width="10" height="6"/><use href="#ch" x="1260" y="111" width="10" height="6"/><use href="#ch" x="932" y="206" width="10" height="6"/><use href="#ch" x="932" y="253" width="10" height="6"/><use href="#ch" x="1267" y="253" width="10" height="6"/><use href="#ch" x="921" y="525" width="10" height="6"/>
<path d="M1267 349l4.500 4.500 4.500-4.500" fill="none" stroke="#999"/>
<g fill="#fff" stroke="#dfe2e9"><rect x="729.500" y="405.500" width="11" height="11" rx="1.500"/><rect x="729.500" y="462.500" width="11" height="11" rx="1.500"/><rect x="729.500" y="582.500" width="11" height="11" rx="1.500"/></g>
</svg>
<span class="r lb" style="left:717px;top:103px">PLC名称</span><span class="t s" style="left:657px;top:103px">*</span>
<span class="r lb" style="left:717px;top:152px">变量名称</span><span class="t s" style="left:657px;top:152px">*</span>
<span class="r lb" style="left:717px;top:199px">变量地址</span><span class="t s" style="left:657px;top:199px">*</span>
<span class="r lb" style="left:717px;top:246px">数据类型</span><span class="t s" style="left:657px;top:246px">*</span>
<span class="r lb" style="left:717px;top:293px">变量描述</span>
<span class="r lb" style="left:1043px;top:103px">读写类型</span><span class="t s" style="left:982px;top:103px">*</span>
<span class="r lb" style="left:1043px;top:152px">变量单位</span>
<span class="r lb" style="left:1043px;top:199px">地址偏移</span><span class="t s" style="left:982px;top:199px">*</span>
<span class="r lb" style="left:1043px;top:246px">数据精度</span>
<span class="t v" style="left:736px;top:105px">测试专用</span>
<span class="t v" style="left:1070px;top:103px">读写</span>
<span class="t v" style="left:736px;top:154px">温度</span>
<span class="t h" style="left:1061px;top:153px">变量单位</span>
<span class="t v" style="left:736px;top:201px">保持寄存器</span>
<span class="t v" style="left:1063px;top:200px">1</span>
<span class="t v" style="left:736px;top:247px">int16</span>
<span class="t v" style="left:1062px;top:248px">0位</span>
<span class="t h" style="left:736px;top:294px">变量描述</span>
<span class="t lb" style="left:634px;top:342px">更多设置</span>
<span class="r lb" style="left:717px;top:401px">线性换算</span><span class="t lb" style="left:749px;top:402px">启用</span>
<span class="r lb" style="left:717px;top:458px">有效范围</span><span class="t lb" style="left:749px;top:459px">启用</span>
<span class="r lb" style="left:717px;top:518px">存储类型</span><span class="t v" style="left:736px;top:520px">不存储</span>
<span class="r lb" style="left:717px;top:578px">安全配置</span>
<div class="a i" style="left:1148px;top:640px;width:58px;height:31px;line-height:29px;text-align:center;color:#777">取消</div>
<div class="a" style="left:1218px;top:640px;width:58px;height:31px;line-height:31px;text-align:center;color:#fff;background:#0a84ff;border-radius:3px">确定</div>

<!-- header -->
<div class="a" style="left:0;top:0;width:1920px;height:45px;background:#6b6e73"></div>
<svg width="1920" height="45">
<path d="M169 34H48c-3 0-5-1-6.500-3.500L33.500 19c-1-5.500-5-9-9.500-9s-8 3.500-9 8.500c-5.500 0-10 4-10 8.500s4.500 8 9.500 8h7c6 0 10.500-4 10.500-8.500s-4-7.500-8.500-7.500-6.500 3-6.500 6 2.500 4.500 4.500 4" fill="none" stroke="#fff" stroke-width="2"/>
<circle cx="1732" cy="24.500" r="6.500" fill="#fff"/>
<path d="M1756 20h12v9h-12zM1756 20l6 5 6-5" fill="none" stroke="#d8d8d8" stroke-width="1"/>
<path d="M1784 22v-4h4M1796 22v-4h-4M1784 27v4h4M1796 27v4h-4M1784.500 18.500l3 3M1795.500 18.500l-3 3M1784.500 30.500l3-3M1795.500 30.500l-3-3" fill="none" stroke="#fff" stroke-width="1"/>
<g fill="none" stroke="#d8d8d8" stroke-width="1"><circle cx="1819.500" cy="25" r="6"/><ellipse cx="1819.500" cy="25" rx="2.800" ry="6"/><path d="M1813.500 25h12M1814.500 22h10M1814.500 28h10"/></g>
<ellipse cx="1877" cy="24" rx="19" ry="19" fill="#62abef"/>
<path d="M1868 42c2-4 5-5 9-5s7 1 9 5c-3 1-6 1.500-9 1.500s-6-.5-9-1.500z" fill="#4a5566"/>
<ellipse cx="1877" cy="25" rx="9.500" ry="12" fill="#f3e8df"/>
<path d="M1867 24c-1-8 4-12 10-12s11 4 10 12c-1-4-3-6-5-6-4 1-8 2-11 0-2 1-3 3-4 6z" fill="#3b3e44"/>
<circle cx="1873" cy="24" r="1" fill="#333"/><circle cx="1881" cy="24" r="1" fill="#333"/>
</svg>
<span class="a w" style="left:47px;top:11px;height:25px;line-height:25px;font-size:25px;font-weight:bold;font-style:italic;-webkit-text-stroke:.4px #fff;transform:skewX(-14deg) scaleY(.72);transform-origin:0 50%;white-space:nowrap">工业互联云</span>
<span class="c" style="left:1732px;top:16px;color:#6b6e73;font-weight:bold;font-size:11px">?</span>
<div class="a" style="left:1756px;top:0;width:34px;height:20px;line-height:20px;background:#f03c3e;color:#fff;text-align:center;border-radius:10px;font-size:14px">99+</div>

<!-- annotation -->
<svg width="1920" height="947">
<rect x="655.500" y="76" width="608" height="541.500" rx="1" fill="none" stroke="#ff1f0f" stroke-width="3"/>
<path d="M541 843L651 652 647 648 661 640 661 658 659 655z" fill="#ff1f0f"/>
</svg>
</body></html>
